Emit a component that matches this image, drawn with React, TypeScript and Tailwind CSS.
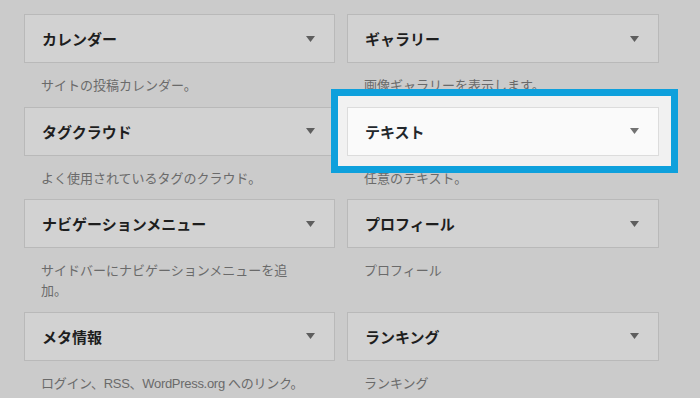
import React from 'react';

type Widget = {
  title: string;
  desc: string;
  active?: boolean;
  nowrap?: boolean;
};

const widgets: Widget[] = [
  { title: 'カレンダー', desc: 'サイトの投稿カレンダー。' },
  { title: 'ギャラリー', desc: '画像ギャラリーを表示します。' },
  { title: 'タグクラウド', desc: 'よく使用されているタグのクラウド。' },
  { title: 'テキスト', desc: '任意のテキスト。', active: true },
  { title: 'ナビゲーションメニュー', desc: 'サイドバーにナビゲーションメニューを追加。' },
  { title: 'プロフィール', desc: 'プロフィール' },
  { title: 'メタ情報', desc: 'ログイン、RSS、WordPress.org へのリンク。', nowrap: true },
  { title: 'ランキング', desc: 'ランキング' },
];

const Arrow = () => (
  <svg width="9" height="6" viewBox="0 0 9 6" className="shrink-0">
    <path d="M0 0h9L4.5 6z" fill="currentColor" />
  </svg>
);

const WidgetItem: React.FC<{ widget: Widget }> = ({ widget }) => {
  const { title, desc, active, nowrap } = widget;

  return (
    <div className="flex flex-col">
      <div className="relative">
        {/* ハイライト枠 */}
        {active && (
          <div className="absolute -left-[16px] -top-[18px] -right-[19px] -bottom-[17px] z-10 border-[7px] border-[#0ea0dc] bg-[#f1f1f1]" />
        )}
        <div
          className={`relative flex h-[49px] items-center justify-between border pl-[17px] pr-[19px] ${
            active
              ? 'z-20 border-[#dcdcdc] bg-[#fafafa] text-[#23282d]'
              : 'border-[#b9b9b9] bg-[#d2d2d2] text-[#1e1e1e]'
          }`}
        >
          <span className="text-[15px] font-bold leading-none mt-[2px]">{title}</span>
          <span className={active ? 'text-[#727272]' : 'text-[#5e5e5e]'}>
            <Arrow />
          </span>
        </div>
      </div>
      <p
        className={`pl-[17px] pt-[13px] pb-[10.5px] w-[287px] text-[13px] leading-[20px] text-[#6a6a6a] ${
          nowrap ? 'whitespace-nowrap tracking-[-0.3px]' : ''
        }`}
      >
        {desc}
      </p>
    </div>
  );
};

export default function App() {
  return (
    <div
      className="w-[700px] h-[398px] overflow-hidden bg-[#cbcbcb] pl-[24px] pt-[14px]"
      style={{ fontFamily: '"Liberation Sans", "Noto Sans CJK JP", sans-serif' }}
    >
      <div className="grid grid-cols-[311px_312px] gap-x-[12px]">
        {widgets.map((w) => (
          <WidgetItem key={w.title} widget={w} />
        ))}
      </div>
    </div>
  );
}
